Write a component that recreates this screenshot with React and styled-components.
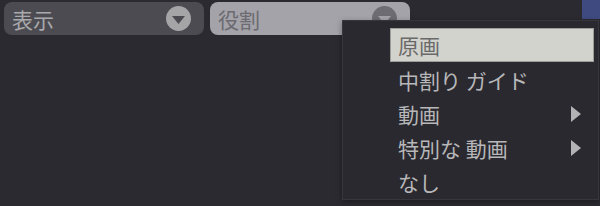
import React from 'react';
import styled, { createGlobalStyle } from 'styled-components';

const GlobalStyle = createGlobalStyle`
  html, body {
    margin: 0;
    padding: 0;
    background: #2b2a30;
    font-family: "Noto Sans CJK JP", "Noto Sans", sans-serif;
  }
`;

const Screen = styled.div`
  position: relative;
  width: 600px;
  height: 206px;
  background: #2b2a30;
  overflow: hidden;
`;

const Toolbar = styled.div`
  display: flex;
  align-items: flex-start;
  gap: 6px;
  padding: 2px 0 0 4px;
`;

const Select = styled.div`
  box-sizing: border-box;
  width: 200px;
  height: 33px;
  border-radius: 8px;
  display: flex;
  align-items: center;
  justify-content: space-between;
  padding: 0 13px 0 8px;
  background: ${p => (p.open ? '#a4a3a9' : '#4b4b51')};
  color: ${p => (p.open ? '#6b6a70' : '#a9a9ac')};
  font-size: 21px;
  line-height: 1;
`;

const Label = styled.span`
  padding-top: 1px;
`;

const Caret = styled.span`
  width: 25px;
  height: 25px;
  border-radius: 50%;
  background: ${p => (p.open ? '#6d6c72' : '#a5a5a8')};
  display: flex;
  align-items: center;
  justify-content: center;
  svg { margin-top: 3px; }
`;

const Swatch = styled.div`
  margin-left: auto;
  margin-top: -2px;
  width: 18px;
  height: 19px;
  background: #3f4a80;
`;

const Menu = styled.ul`
  position: absolute;
  left: 342px;
  top: 20px;
  width: 257px;
  height: 180px;
  box-sizing: border-box;
  margin: 0;
  padding: 7px 4px 0 47px;
  list-style: none;
  background: #2a292f;
  border: 1px solid #37363c;
  box-shadow: 0 2px 6px rgba(0, 0, 0, 0.35);
`;

const Item = styled.li`
  box-sizing: border-box;
  height: 34px;
  display: flex;
  align-items: center;
  justify-content: space-between;
  padding: 0 12px 0 7px;
  font-size: 21px;
  line-height: 1;
  color: ${p => (p.active ? '#6a6a6a' : '#b7b7b9')};
  background: ${p => (p.active ? '#d3d3cd' : 'transparent')};
  border: 1px solid ${p => (p.active ? '#9d9d99' : 'transparent')};
  margin-bottom: ${p => (p.active ? '1px' : '0')};
`;

const Arrow = () => (
  <svg width="10" height="16" viewBox="0 0 10 16">
    <path d="M0 0 L10 8 L0 16 Z" fill="#b3b3b5" />
  </svg>
);

const Down = ({ color }) => (
  <svg width="13" height="8" viewBox="0 0 13 8">
    <path d="M0 0 H13 L6.5 8 Z" fill={color} />
  </svg>
);

const items = [
  { label: '原画', active: true },
  { label: '中割り ガイド' },
  { label: '動画', sub: true },
  { label: '特別な 動画', sub: true },
  { label: 'なし' },
];

export default function App() {
  return (
    <>
      <GlobalStyle />
      <Screen>
        <Toolbar>
          <Select>
            <Label>表示</Label>
            <Caret><Down color="#4b4b51" /></Caret>
          </Select>
          <Select open>
            <Label>役割</Label>
            <Caret open><Down color="#a4a3a9" /></Caret>
          </Select>
          <Swatch />
        </Toolbar>
        <Menu>
          {items.map(it => (
            <Item key={it.label} active={it.active}>
              <span>{it.label}</span>
              {it.sub && <Arrow />}
            </Item>
          ))}
        </Menu>
      </Screen>
    </>
  );
}
